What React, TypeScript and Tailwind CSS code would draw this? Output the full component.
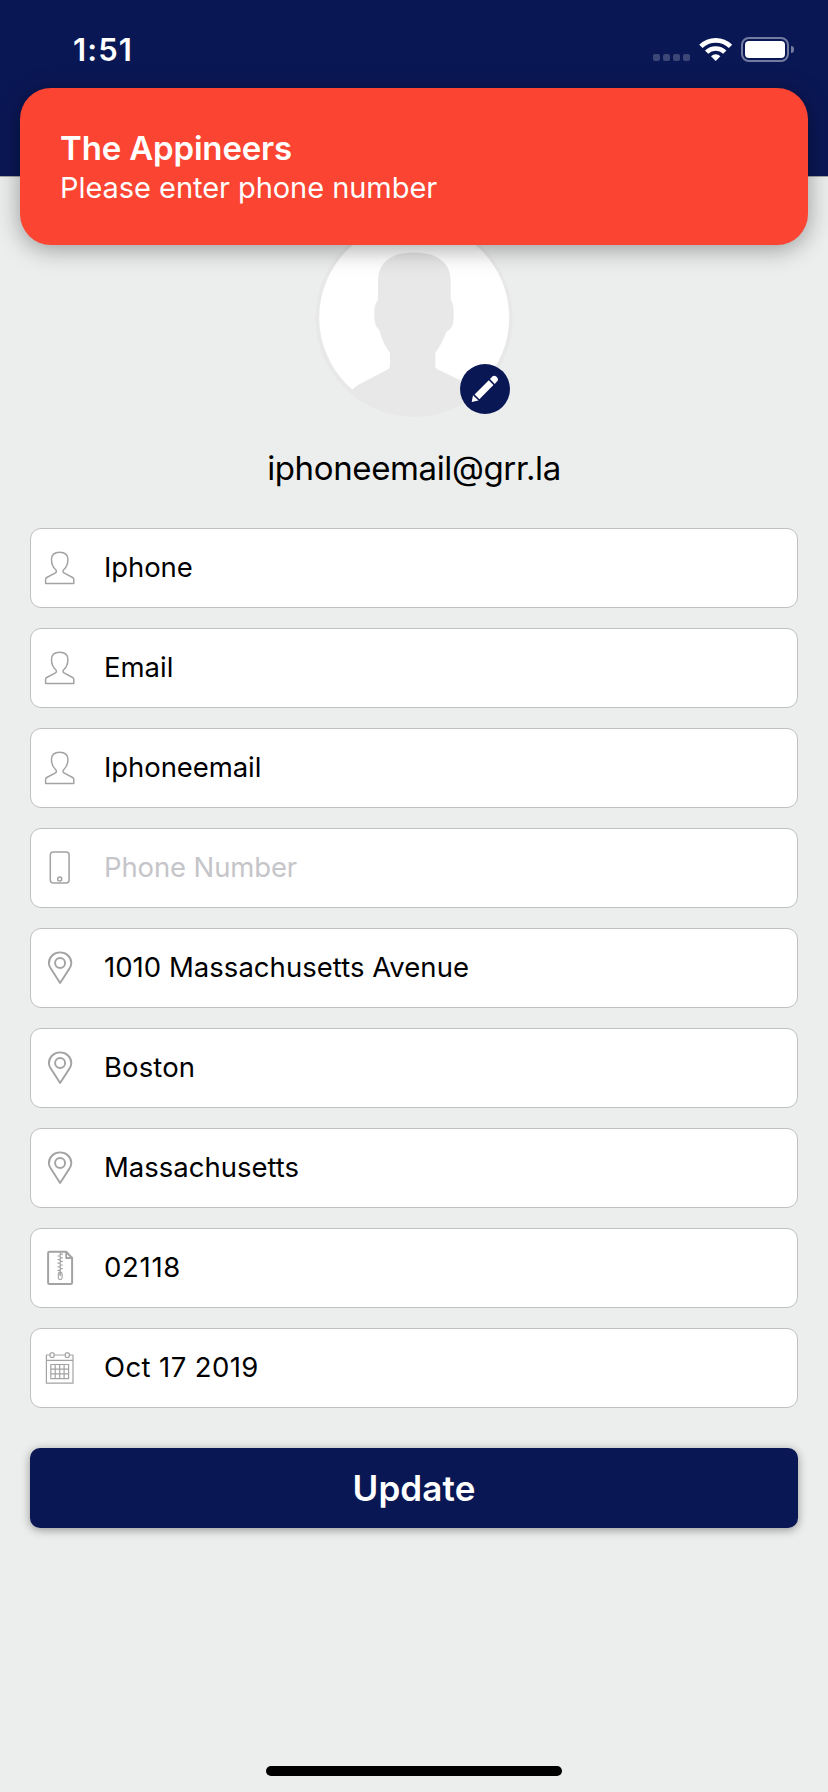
import type { ReactNode } from 'react';

function Icon({ children }: { children: ReactNode }) {
  return (
    <svg
      viewBox="0 0 32 36"
      className="h-[36px] w-[32px] shrink-0 text-[#a3a3a3]"
      fill="none"
      stroke="currentColor"
      strokeWidth="1.5"
      strokeLinejoin="round"
      strokeLinecap="round"
    >
      {children}
    </svg>
  );
}

const UserIcon = () => (
  <Icon>
    <path d="M15.7 2.2C10.4 2.2 7.5 4.8 7.5 9.5C7.5 14.6 8.8 17 11.3 19.3C12.9 20.7 12.6 22.2 11.4 22.9L2.8 27.5Q1.6 28.2 1.6 29.5V33.5H29.8V29.5Q29.8 28.2 28.6 27.5L20 22.9C18.8 22.2 18.5 20.7 20.1 19.3C22.6 17 23.9 14.6 23.9 9.5C23.9 4.8 21 2.2 15.7 2.2Z" />
  </Icon>
);

const PhoneIcon = () => (
  <Icon>
    <rect x="6.3" y="1.9" width="18.8" height="31.2" rx="3" />
    <circle cx="15.7" cy="29" r="2" />
  </Icon>
);

const PinIcon = () => (
  <Icon>
    <path
      strokeWidth="1.9"
      d="M16.1 33L6.8 18.6C5.6 16.8 4.9 15.2 4.9 13.2C4.9 6.9 9.9 2.4 16.1 2.4C22.3 2.4 27.3 6.9 27.3 13.2C27.3 15.2 26.6 16.8 25.4 18.6Z"
    />
    <circle cx="16.1" cy="13" r="5" strokeWidth="1.9" />
  </Icon>
);

const ZipIcon = () => (
  <Icon>
    <path strokeWidth="2" d="M22.2 1.8H5.4Q4.1 1.8 4.1 3.1V32.7Q4.1 34 5.4 34H26.8Q28.1 34 28.1 32.7V8Z" />
    <path strokeWidth="1.8" d="M22.2 2V8H28" />
    <path
      strokeWidth="1.2"
      d="M16.2 3V22M16.2 4.2H18.4M16.2 7.8H18.4M16.2 11.4H18.4M16.2 15H18.4M16.2 18.6H18.4M16.2 6H14M16.2 9.6H14M16.2 13.2H14M16.2 16.8H14M16.2 20.4H14"
    />
    <rect x="14.3" y="22" width="3.8" height="7.6" rx="1.9" strokeWidth="1.1" />
    <path strokeWidth="1.8" d="M16.2 22.4V25" />
  </Icon>
);

const CalendarIcon = () => (
  <Icon>
    <path strokeWidth="1.2" d="M6 5H2.4V33.2H29V5H25.4M10.2 5H21.2M2.4 10.4H29" />
    <rect x="6.1" y="2.8" width="4" height="4.6" rx="1.2" strokeWidth="1.2" />
    <rect x="21.3" y="2.8" width="4" height="4.6" rx="1.2" strokeWidth="1.2" />
    <path
      strokeWidth="1.2"
      d="M6.8 14.5H24.6V28.6H6.8ZM11.2 14.5V28.6M15.7 14.5V28.6M20.1 14.5V28.6M6.8 19.2H24.6M6.8 23.9H24.6"
    />
  </Icon>
);

const fields: { icon: () => ReactNode; value: string; style: string }[] = [
  { icon: UserIcon, value: 'Iphone', style: 'text-black tracking-[-0.1px]' },
  { icon: UserIcon, value: 'Email', style: 'text-black' },
  { icon: UserIcon, value: 'Iphoneemail', style: 'text-black tracking-[-0.08px]' },
  { icon: PhoneIcon, value: 'Phone Number', style: 'text-[#c5c5c9] tracking-[-0.13px]' },
  { icon: PinIcon, value: '1010 Massachusetts Avenue', style: 'text-black tracking-[0.03px]' },
  { icon: PinIcon, value: 'Boston', style: 'text-black tracking-[0.1px]' },
  { icon: PinIcon, value: 'Massachusetts', style: 'text-black' },
  { icon: ZipIcon, value: '02118', style: 'text-black tracking-[0.7px]' },
  { icon: CalendarIcon, value: 'Oct 17 2019', style: 'text-black tracking-[0.4px]' },
];

function StatusBar() {
  return (
    <div className="flex items-start justify-between pr-[34px] pl-[73px] text-white">
      <span className="mt-[31px] text-[31px] leading-[38px] font-semibold tracking-[1.1px]">1:51</span>
      <div className="mt-[37px] flex h-[25px] items-end">
        <div className="mb-px flex gap-[3px]">
          {[0, 1, 2, 3].map((i) => (
            <span key={i} className="size-[7px] rounded-[2px] bg-[#3c4677]" />
          ))}
        </div>
        <svg viewBox="0 0 34 25" className="ml-[9px] h-[25px] w-[34px]" fill="none" stroke="white">
          <path d="M1.9 9.4A21 21 0 0 1 31.5 9.4" strokeWidth="4.8" />
          <path d="M7.6 15.2A12.9 12.9 0 0 1 25.8 15.2" strokeWidth="4.6" />
          <path d="M16.7 24L12 19.3A6.7 6.7 0 0 1 21.4 19.3Z" fill="white" stroke="none" />
        </svg>
        <div className="ml-[8px] flex h-[25px] w-[48px] rounded-[8px] border-2 border-[#747ba0] p-[2px]">
          <div className="flex-1 rounded-[4px] bg-white" />
        </div>
        <div className="mb-[9px] ml-[2px] h-[7px] w-[3px] rounded-r-[3px] bg-[#747ba0]" />
      </div>
    </div>
  );
}

function Avatar() {
  return (
    <div className="relative mt-[42px] h-[198px] w-[198px]">
      <svg viewBox="315 219 198 198" className="h-[198px] w-[198px]">
        <defs>
          <clipPath id="disc">
            <circle cx="414" cy="318" r="98.7" />
          </clipPath>
        </defs>
        <circle cx="414" cy="318" r="98.7" fill="#e8e8e8" />
        <circle cx="414.2" cy="317.5" r="95" fill="white" />
        <path
          clipPath="url(#disc)"
          fill="#e8e8e8"
          d="M414 252.500C390 252.500 378 263 378 281V300C375 304 374.300 308 374.300 314C374.300 322 375 326 379.300 330C382 340 385 346 390 353V365C390 368 388.500 369 385.700 370.500L358 385Q354 387.500 351 391L340 430H490L477 391Q474 387.500 470 385L440 370.500C436.500 369 435.300 368 435.300 365V353C440 346 443.500 340 446.300 332C452.500 328 453.700 324 453.700 316C453.700 308 453.500 304 450.700 300V281C450.700 263 438 252.500 414 252.500Z"
        />
      </svg>
      <svg viewBox="0 0 50 50" className="absolute top-[145px] left-[145px] size-[50px]">
        <circle cx="25" cy="25" r="25" fill="#0a1755" />
        <g fill="white">
          <path d="M11.700 37.900L13 31.200L18.500 36.500Z" />
          <path d="M14.600 30.600L28.800 16.300L33.400 21L19.400 35.200Z" />
          <path d="M30 15L32.400 12.600Q34.300 10.900 36.500 12.800Q39 15.200 37.400 17.100L34.700 19.900Z" />
        </g>
      </svg>
    </div>
  );
}

export default function App() {
  return (
    <div className="relative flex h-[1792px] w-[828px] flex-col overflow-hidden bg-[#eceeed] font-[Inter,'Liberation_Sans',sans-serif]">
      <header className="h-[177px] shrink-0 border-b border-[#a3a5a8] bg-[#0a1755]">
        <StatusBar />
      </header>

      <div
        role="alert"
        className="absolute top-[88px] left-[20px] z-10 h-[157px] w-[788px] rounded-[31px] bg-[#fb4431] px-[40px] pt-[40px] text-white shadow-[0_4px_24px_rgba(0,0,0,0.36)]"
      >
        <p className="text-[33px] leading-[40px] font-semibold tracking-[-0.16px]">The Appineers</p>
        <p className="text-[29px] leading-[40px] tracking-[-0.05px]">Please enter phone number</p>
      </div>

      <main className="flex flex-col items-center px-[30px]">
        <Avatar />
        <p className="mt-[31px] text-[33px] leading-[40px] tracking-[-0.37px] text-black">iphoneemail@grr.la</p>
        <div className="mt-[40px] flex w-full flex-col gap-[20px]">
          {fields.map(({ icon: FieldIcon, value, style }) => (
            <div
              key={value}
              className="flex h-[80px] items-center gap-[28px] rounded-[11px] border border-[#bfc1c0] bg-white px-[13px]"
            >
              <FieldIcon />
              <span className={`pb-[2px] text-[27.5px] leading-[36px] ${style}`}>{value}</span>
            </div>
          ))}
        </div>
        <button
          type="button"
          className="mt-[40px] h-[80px] w-full rounded-[10px] bg-[#0a1755] text-[35px] leading-[42px] font-semibold tracking-[0.1px] text-white shadow-[0_2px_10px_rgba(0,0,0,0.38)]"
        >
          Update
        </button>
      </main>

      <div className="mx-auto mt-auto mb-[16px] h-[10px] w-[296px] shrink-0 rounded-full bg-black" />
    </div>
  );
}
